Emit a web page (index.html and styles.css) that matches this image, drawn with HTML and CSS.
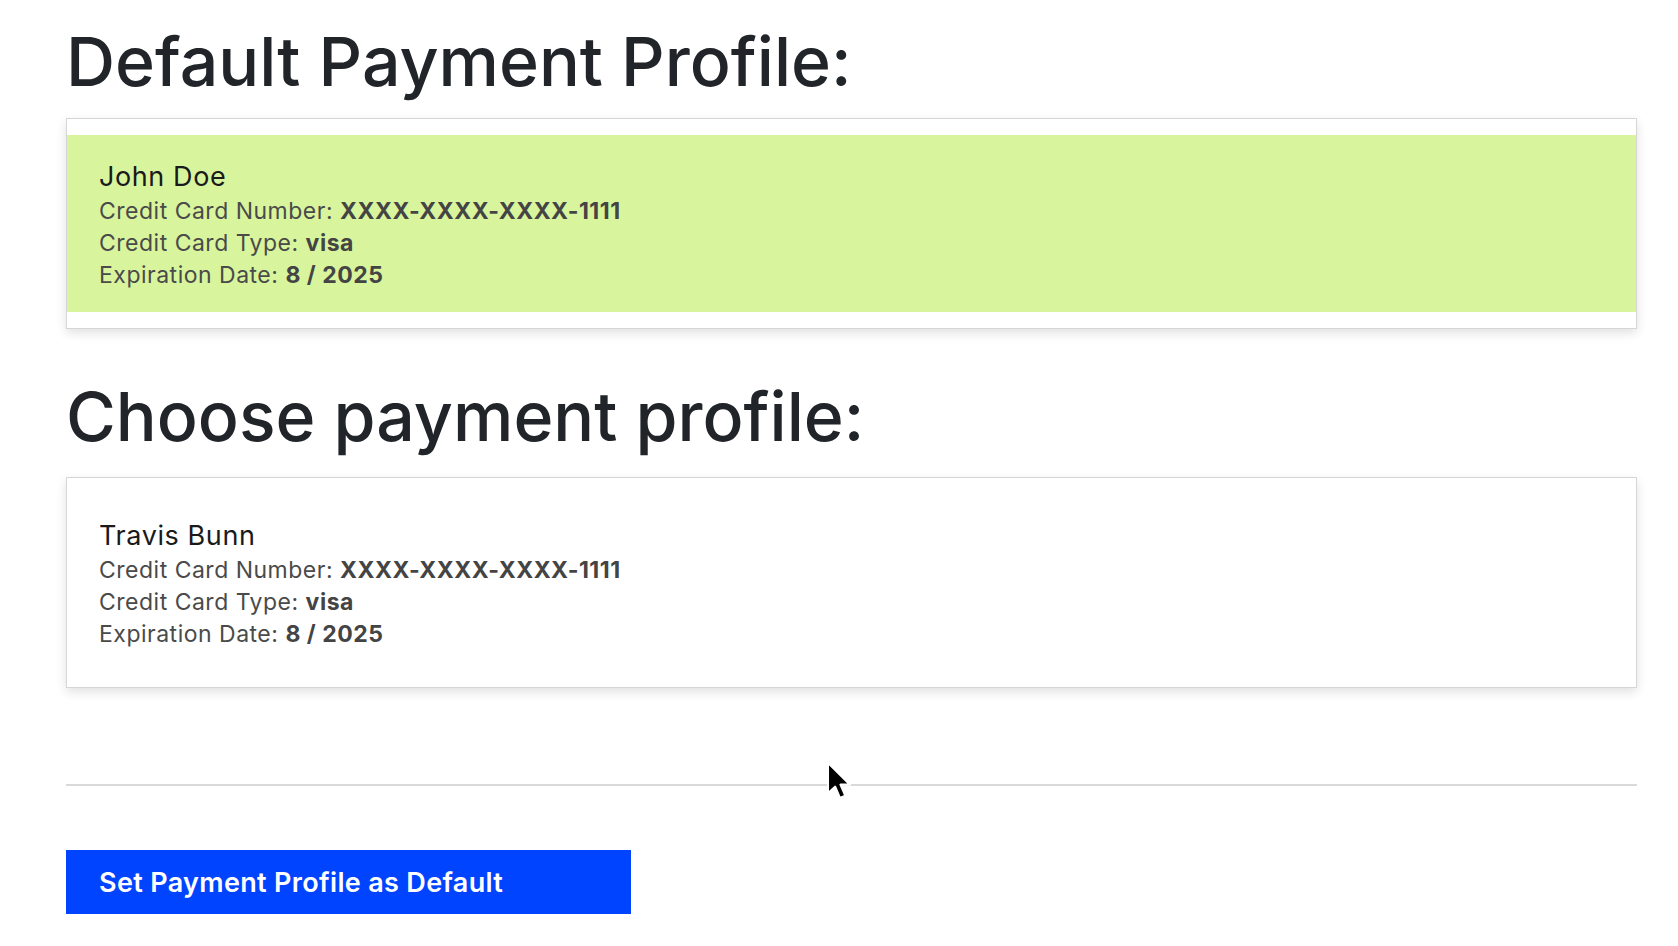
FILE: index.html
```html
<!DOCTYPE html>
<html lang="en">
<head>
<meta charset="utf-8">
<title>Payment Profiles</title>
<link rel="stylesheet" href="styles.css">
</head>
<body>
<main class="page">
  <h1 class="title">Default Payment Profile:</h1>
  <section class="card">
    <div class="card-body card-body--default">
      <div class="name">John Doe</div>
      <div class="line">Credit Card Number: <b>XXXX-XXXX-XXXX-1111</b></div>
      <div class="line">Credit Card Type: <b>visa</b></div>
      <div class="line">Expiration Date: <b>8 / 2025</b></div>
    </div>
  </section>

  <h1 class="title title--second">Choose payment profile:</h1>
  <section class="card">
    <div class="card-body">
      <div class="name">Travis Bunn</div>
      <div class="line">Credit Card Number: <b>XXXX-XXXX-XXXX-1111</b></div>
      <div class="line">Credit Card Type: <b>visa</b></div>
      <div class="line">Expiration Date: <b>8 / 2025</b></div>
    </div>
  </section>

  <hr class="divider">

  <button class="btn-primary" type="button">Set Payment Profile as Default</button>
</main>
<svg class="cursor" width="29" height="43" viewBox="0 0 24 36" aria-hidden="true">
  <path d="M1.5 1.5 L1.5 27 L7.5 21.5 L11.5 31 L16 29 L12 19.8 L20 19.8 Z" fill="#000" stroke="#fff" stroke-width="1.8" stroke-linejoin="round"/>
</svg>
</body>
</html>
```
FILE: styles.css
```css
html, body {
  margin: 0;
  padding: 0;
  background: #ffffff;
}

body {
  position: relative;
  font-family: Inter, "Noto Sans", "Liberation Sans", sans-serif;
  color: #212529;
}

.page {
  padding: 19px 41px 40px 66px;
}

.title {
  margin: 0 0 15px;
  font-size: 68px;
  line-height: 84px;
  font-weight: 500;
  color: #212529;
}

.title--second {
  margin-top: 45px;
  margin-bottom: 19px;
}

.card {
  border: 1px solid #d6d6d6;
  padding: 16px 0;
  background: #ffffff;
  box-shadow: 0 4px 10px rgba(0, 0, 0, 0.12);
}

.card-body {
  padding: 24px 32px 21px;
}

.card-body--default {
  background: #d8f59d;
}

.name {
  font-size: 27px;
  line-height: 36px;
  letter-spacing: 0.6px;
  color: #1a1a1a;
}

.line {
  font-size: 23px;
  line-height: 32px;
  letter-spacing: 0.5px;
  color: #4a4a4a;
}

.line b {
  font-weight: 700;
  color: #444444;
}

.divider {
  margin: 96px 0 64px;
  border: 0;
  border-top: 2px solid #d9d9d9;
  height: 0;
}

.btn-primary {
  display: block;
  width: 565px;
  height: 64px;
  padding: 0 0 0 33px;
  border: 0;
  border-radius: 0;
  background: #0044ff;
  color: #ffffff;
  font-family: Inter, "Noto Sans", "Liberation Sans", sans-serif;
  font-size: 27px;
  font-weight: 600;
  letter-spacing: 0.33px;
  text-align: left;
  cursor: pointer;
}

.cursor {
  position: absolute;
  left: 826px;
  top: 761px;
}
```
